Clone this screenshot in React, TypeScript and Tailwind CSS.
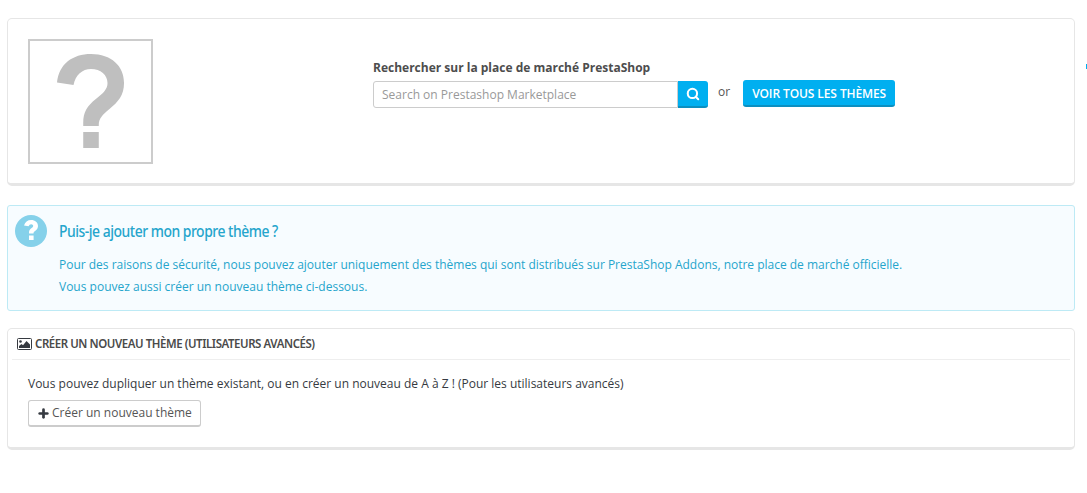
import { Search, Plus } from 'lucide-react';

const sans = 'font-["Open_Sans",sans-serif]';

export default function App() {
  return (
    <div className={`${sans} relative min-h-[493px] bg-white text-[12px] text-[#363a41] pt-[18px] pl-[7px] pr-[12px] overflow-hidden`}>
      <div className="absolute right-0 top-[64px] w-[1px] h-[5px] bg-[#00aff0]" />

      <div className="h-[168px] rounded-[5px] border border-[#e6e6e6] border-b-[3px] flex pl-[20px] pt-[20px]">
        <div className="w-[125px] h-[125px] border-[2px] border-[#ccc] flex items-center justify-center shrink-0">
          <svg width="68" height="95" viewBox="0 0 70 95" preserveAspectRatio="none">
            <path fill="#bfbfbf" d="M0 28.500C2 10 16 0 35 0c21 0 34 12 34 29 0 12-6 19-15 26-7 6-11 9-11 16v1H27v-3c0-11 4-17 13-24 8-6 12-10 12-16 0-8-7-14-17-14-9 0-16 6-18 16L0 28.500zM27 78h16v16H27z" />
          </svg>
        </div>
        <div className="ml-[220px] pt-[20px]">
          <p className="font-bold text-[12px] leading-[18px] text-[#4d4d4d]">Rechercher sur la place de marché PrestaShop</p>
          <div className="flex items-start mt-[4px]">
            <div className="w-[305px] h-[27px] border border-[#ccc] rounded-l-[3px] px-[8px] text-[12px] leading-[25px] text-[#999]">Search on Prestashop Marketplace</div>
            <button className="w-[30px] h-[27px] bg-[#00aff0] border-b-[2px] border-[#0b8fc0] rounded-r-[3px] flex items-center justify-center text-white">
              <Search size={14} strokeWidth={3.5} />
            </button>
            <span className="ml-[10px] -mt-[2px] leading-[26px] text-[12px] text-[#555]">or</span>
            <button className="ml-[13px] -mt-[1px] h-[27px] w-[152px] pt-[2px] bg-[#00aff0] border-b-[2px] border-[#0b8fc0] rounded-[3px] text-white text-[12px] font-semibold tracking-[-0.1px]">VOIR TOUS LES THÈMES</button>
          </div>
        </div>
      </div>

      <div className="relative mt-[19px] h-[106px] rounded-[3px] border border-[#bdeaf5] bg-[#f7fcff] pl-[51px] pt-[14px] text-[#25a5cc]">
        <div className="absolute left-[7px] top-[9px] w-[32px] h-[32px] rounded-full bg-[#85d1ea] flex items-center justify-center text-white">
          <svg width="14" height="22" viewBox="0 0 14 22">
            <path fill="#fff" d="M0 5.500C1 2 3.500 0 7.200 0 11 0 14 2.400 14 6c0 2.400-1.300 3.700-2.900 4.900-1 .8-1.600 1.300-1.600 2.600H5v-1.200c0-2 1-3.100 2.300-4.100 1-.8 1.900-1.300 1.900-2.200 0-1-.9-1.700-2-1.700-1.200 0-2 .8-2.600 2L0 5.500zM5 15.500h4.600V20H5z" />
          </svg>
        </div>
        <h2 className="inline-block origin-left scale-x-[0.87] text-[16px] leading-[22px] font-medium font-['Noto_Sans',sans-serif] tracking-[-0.55px]">Puis-je ajouter mon propre thème ?</h2>
        <p className="mt-[12px] leading-[21px] tracking-[-0.01px]">Pour des raisons de sécurité, nous pouvez ajouter uniquement des thèmes qui sont distribués sur PrestaShop Addons, notre place de marché officielle.</p>
        <p className="leading-[23px]">Vous pouvez aussi créer un nouveau thème ci-dessous.</p>
      </div>

      <div className="mt-[17px] h-[122px] rounded-[5px] border border-[#e6e6e6] border-b-[3px] px-[4px]">
        <div className="h-[31px] border-b border-[#eee] flex items-center pl-[5px] gap-[3px] text-[#555]">
          <svg width="15" height="12" viewBox="0 0 15 12" className="text-[#363a41]">
            <rect x="0.500" y="0.500" width="14" height="11" rx="1" fill="none" stroke="currentColor" />
            <circle cx="3.500" cy="3.500" r="1.300" fill="currentColor" />
            <path fill="currentColor" d="M2 10V8l2.500-2 1.500 1.200L9.500 3 13 6.500V10z" />
          </svg>
          <h3 className="origin-left scale-x-[0.955] text-[12px] font-semibold font-['Noto_Sans',sans-serif] tracking-[-0.45px] text-[#4a4a4a] whitespace-nowrap">CRÉER UN NOUVEAU THÈME (UTILISATEURS AVANCÉS)</h3>
        </div>
        <div className="pl-[16px] pt-[15px]">
          <p className="leading-[18px]">Vous pouvez dupliquer un thème existant, ou en créer un nouveau de A à Z ! (Pour les utilisateurs avancés)</p>
          <button className="mt-[7px] h-[27px] w-[173px] border border-[#ccc] border-b-[2px] rounded-[3px] flex items-center pl-[8px] gap-[2px] text-[12px] text-[#555]">
            <Plus size={13} strokeWidth={5} className="text-[#363a41]" />
            Créer un nouveau thème
          </button>
        </div>
      </div>
    </div>
  );
}
